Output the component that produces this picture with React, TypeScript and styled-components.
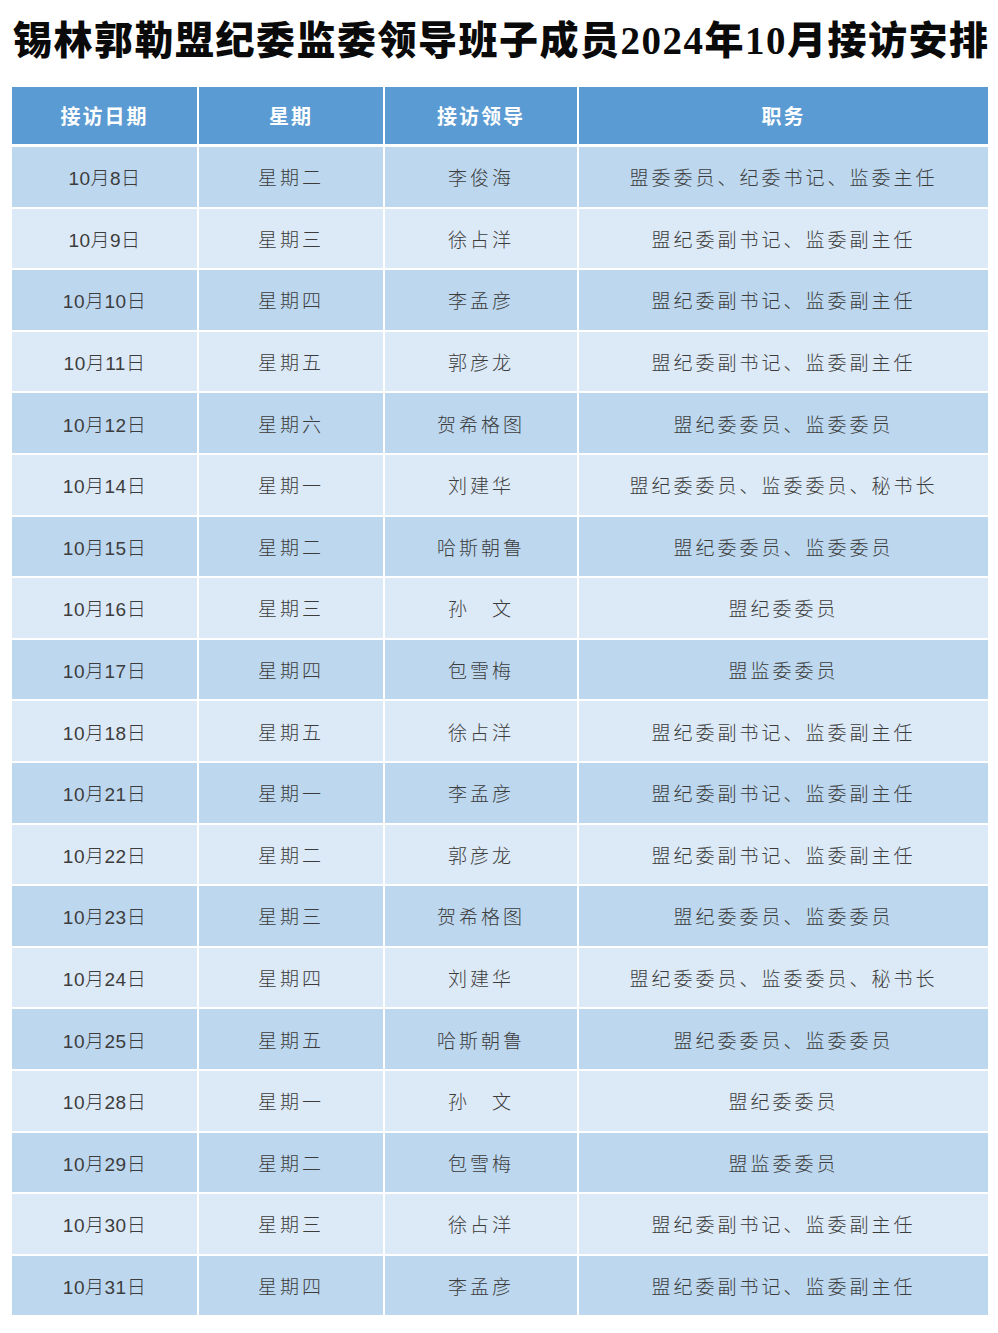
import React from 'react';
import styled, { createGlobalStyle } from 'styled-components';

const GlobalStyle = createGlobalStyle`
  html, body {
    margin: 0;
    padding: 0;
    background: #ffffff;
  }
`;

const Page = styled.div`
  width: 998px;
  padding: 15px 10px 16px 12px;
  box-sizing: border-box;
`;

const Title = styled.h1`
  margin: 0 0 20px 1px;
  font-family: 'Liberation Serif', 'Noto Sans CJK SC', serif;
  font-size: 39px;
  font-weight: 900;
  line-height: 52px;
  letter-spacing: 1.5px;
  color: #0a0a0a;
  white-space: nowrap;
`;

const Table = styled.div`
  display: flex;
  flex-direction: column;
  gap: 2px;
  width: 976px;
`;

type Tone = 'head' | 'dark' | 'light';

const Row = styled.div<{ $tone: Tone }>`
  display: grid;
  grid-template-columns: 185px 184px 192px 409px;
  column-gap: 2px;
  height: ${(p) => (p.$tone === 'head' ? '57px' : '59.6px')};
  margin-bottom: ${(p) => (p.$tone === 'head' ? '1px' : '0')};
`;

const Cell = styled.div<{ $tone: Tone; $date?: boolean }>`
  display: flex;
  align-items: center;
  justify-content: center;
  background: ${(p) =>
    p.$tone === 'head' ? '#5b9bd3' : p.$tone === 'dark' ? '#bdd7ee' : '#dce9f6'};
  color: ${(p) => (p.$tone === 'head' ? '#ffffff' : '#3c3c3c')};
  font-family: ${(p) =>
    p.$tone === 'head'
      ? "'Noto Sans CJK SC', sans-serif"
      : "'Liberation Sans', 'Noto Sans CJK SC', sans-serif"};
  font-size: ${(p) => (p.$tone === 'head' ? '20px' : '19px')};
  font-weight: ${(p) => (p.$tone === 'head' ? 700 : 300)};
  letter-spacing: ${(p) => (p.$tone === 'head' ? '2px' : p.$date ? '0.5px' : '3px')};
  white-space: nowrap;
`;

type Visit = [string, string, string, string];

const visits: Visit[] = [
  ['10月8日', '星期二', '李俊海', '盟委委员、纪委书记、监委主任'],
  ['10月9日', '星期三', '徐占洋', '盟纪委副书记、监委副主任'],
  ['10月10日', '星期四', '李孟彦', '盟纪委副书记、监委副主任'],
  ['10月11日', '星期五', '郭彦龙', '盟纪委副书记、监委副主任'],
  ['10月12日', '星期六', '贺希格图', '盟纪委委员、监委委员'],
  ['10月14日', '星期一', '刘建华', '盟纪委委员、监委委员、秘书长'],
  ['10月15日', '星期二', '哈斯朝鲁', '盟纪委委员、监委委员'],
  ['10月16日', '星期三', '孙\u3000文', '盟纪委委员'],
  ['10月17日', '星期四', '包雪梅', '盟监委委员'],
  ['10月18日', '星期五', '徐占洋', '盟纪委副书记、监委副主任'],
  ['10月21日', '星期一', '李孟彦', '盟纪委副书记、监委副主任'],
  ['10月22日', '星期二', '郭彦龙', '盟纪委副书记、监委副主任'],
  ['10月23日', '星期三', '贺希格图', '盟纪委委员、监委委员'],
  ['10月24日', '星期四', '刘建华', '盟纪委委员、监委委员、秘书长'],
  ['10月25日', '星期五', '哈斯朝鲁', '盟纪委委员、监委委员'],
  ['10月28日', '星期一', '孙\u3000文', '盟纪委委员'],
  ['10月29日', '星期二', '包雪梅', '盟监委委员'],
  ['10月30日', '星期三', '徐占洋', '盟纪委副书记、监委副主任'],
  ['10月31日', '星期四', '李孟彦', '盟纪委副书记、监委副主任'],
];

const headers = ['接访日期', '星期', '接访领导', '职务'];

const App: React.FC = () => {
  return (
    <>
      <GlobalStyle />
      <Page>
        <Title>锡林郭勒盟纪委监委领导班子成员2024年10月接访安排</Title>
        <Table>
          <Row $tone="head">
            {headers.map((h) => (
              <Cell key={h} $tone="head">
                {h}
              </Cell>
            ))}
          </Row>
          {visits.map((v, i) => {
            const tone: Tone = i % 2 === 0 ? 'dark' : 'light';
            return (
              <Row key={v[0]} $tone={tone}>
                {v.map((text, j) => (
                  <Cell key={j} $tone={tone} $date={j === 0}>
                    {text}
                  </Cell>
                ))}
              </Row>
            );
          })}
        </Table>
      </Page>
    </>
  );
};

export default App;
